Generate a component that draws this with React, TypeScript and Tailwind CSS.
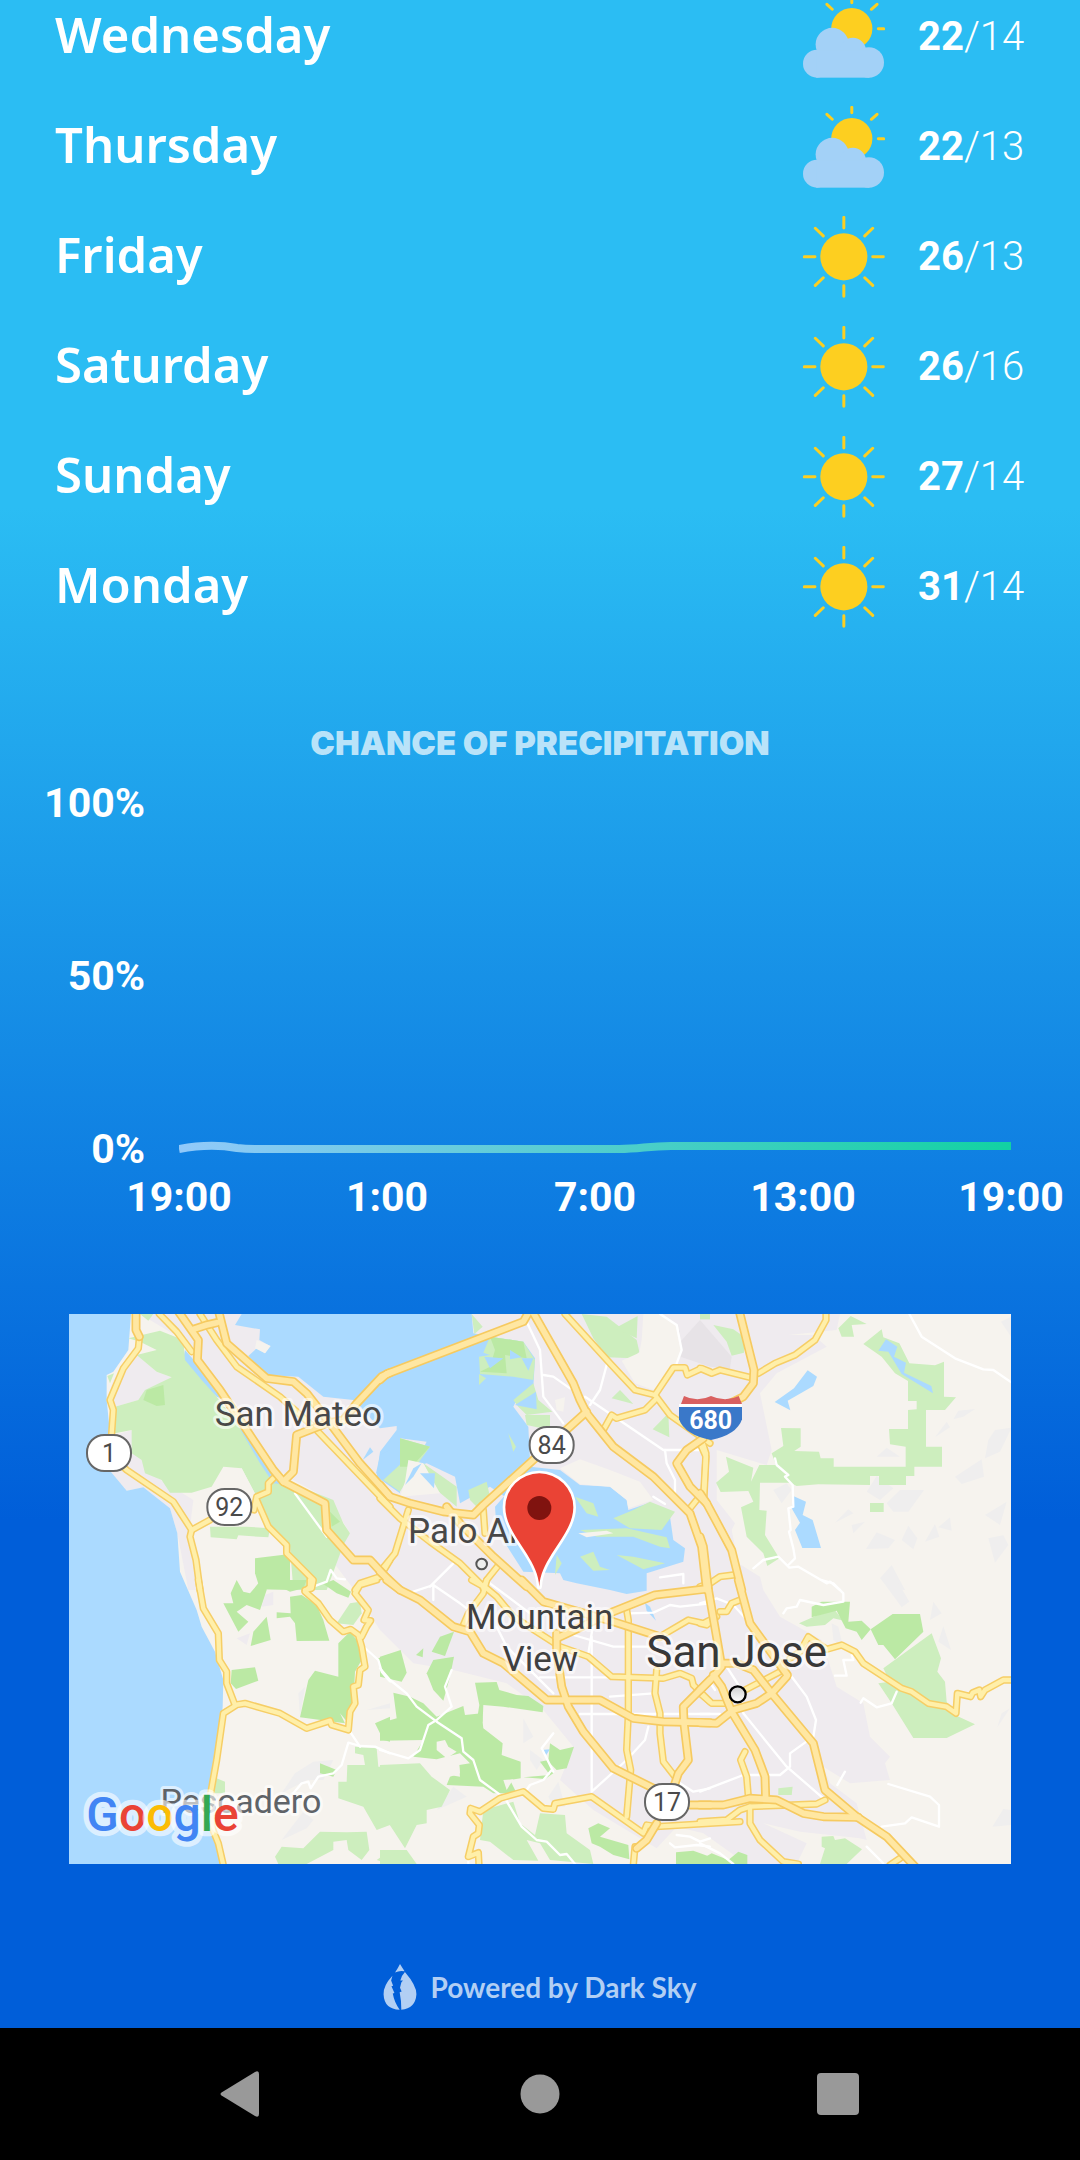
type Tile = [number, number];
type Shape = [Tile, string];

const A: Tile = [0, 0];
const B: Tile = [960, 0];
const C: Tile = [1920, 0];
const D: Tile = [0, 840];
const E: Tile = [960, 840];
const F: Tile = [1920, 840];

const urban: Shape[] = [
  [A, "240,42 2340,42 2330,90 2185,105 2260,105 2300,140 2150,220 2100,280 2135,450 2120,495 1970,450 1970,600 2025,670 2015,690 2035,790 2100,830 2110,870 2160,950 2285,1020 2330,1160 2410,1210 2430,1310 2490,1370 2475,1390 2490,1440 2370,1450 2290,1400 2310,1450 2390,1510 2420,1620 2400,1615 2220,1595 2110,1570 2240,1630 2210,1692 2060,1692 1930,1600 1850,1580 1790,1645 1600,1530 1500,1440 1540,1340 1450,1230 1340,1150 1180,1110 1060,1090 960,990 890,880 800,760 870,700 810,600 700,540 640,500 540,390 410,200 370,120"],
  [A, "225,160 290,215 335,232 290,262 235,300 165,320 140,300 160,240"],
  [A, "215,390 220,440 270,520 400,600 390,680 430,870 385,870 352,700 330,625 250,562 200,572 140,500 150,410"],
  [D, "640,35 640,75 605,80 615,45"],
  [D, "530,175 570,160 560,195"],
];

const hills: Shape[] = [
  [B, "870,160 960,60 1055,170 1050,205 990,200"],
  [B, "860,150 900,90 900,170"],
];

const ridges: Shape[] = [
  [C, "765,530 845,478 852,530 785,552"],
  [C, "530,470 560,443 600,470"],
  [C, "560,610 600,570 672,570 625,635 580,635"],
  [C, "500,575 530,528 580,565 540,600"],
  [C, "498,747 530,697 585,720 565,745"],
  [C, "605,720 625,677 652,715 640,748"],
  [C, "675,725 705,672 718,710"],
  [C, "855,645 920,605 900,675"],
  [C, "865,715 910,706 925,735 885,788"],
  [C, "760,358 775,332 825,327 790,350"],
  [C, "705,412 740,365 750,382"],
  [C, "865,420 885,390 935,383 900,455 855,475"],
  [C, "540,835 575,795 615,870 570,868"],
  [C, "405,668 445,628 460,640"],
  [C, "455,675 495,665 460,700"],
  [C, "220,570 260,550 275,570 245,610"],
  [C, "715,682 750,652 755,692"],
  [C, "903,65 933,50 933,110"],
  [F, "545,0 590,0 628,65 605,82"],
  [F, "700,65 725,100 690,120"],
  [F, "730,138 753,210 715,185"],
  [F, "395,130 415,140 430,205 400,180"],
  [F, "877,740 910,687 933,690 933,735"],
  [F, "892,442 905,400 930,385"],
  [D, "705,580 760,545 820,540 790,600 740,600 665,640"],
  [D, "665,780 730,695 760,720 740,745"],
  [D, "720,410 715,340 735,320"],
  [D, "920,390 990,370 990,385"],
  [E, "430,415 460,470 430,490"],
  [E, "505,650 535,605 555,680 520,680"],
  [E, "170,690 220,620 260,650"],
  [E, "450,540 450,510 490,540 470,570"],
];

const water: Shape[] = [
  [A, "27,42 213,42 205,150 160,215 140,225 140,300 150,400 140,500 200,572 250,562 330,625 352,700 360,815 410,930 425,980 465,1055 490,1140 488,1220 470,1430 443,1480 450,1580 470,1640 485,1692 27,1692"],
  [A, "545,42 525,75 600,88 598,120 630,138 615,160 590,145 565,168 620,225 715,230 790,290 880,300 960,385 1010,378 1010,390 960,455 950,530 1020,580 1020,415 1100,425 1060,500 1100,490 1185,530 1200,610 1290,560 1335,590 1400,540 1410,480 1405,380 1360,320 1370,300 1420,260 1425,175 1390,125 1290,110 1240,100 1235,42"],
  [B, "345,620 450,500 540,510 600,555 690,560 740,600 745,630 805,610 870,650 880,720 915,745 910,785 800,820 800,872 740,882 690,870 590,850 550,840 540,820 430,815 350,690"],
  [A, "375,150 410,190 480,260 500,300 470,290 410,235 370,175"],
  [A, "530,380 560,400 640,520 690,590 725,640 680,620 640,570 590,500"],
  [A, "908,480 930,442 940,455"],
  [A, "948,520 960,465 990,450 990,545"],
  [C, "323,211 351,230 340,258 263,302 271,331 224,306 282,265"],
  [C, "280,588 318,605 308,645 338,660 363,744 307,744 285,690 300,668 275,625"],
  [E, "795,68 810,80 828,122 800,92"],
  [E, "484,510 510,508 498,526"],
];

const park: Shape[] = [
  [A, "205,115 300,92 370,120 375,180 425,240 470,290 530,370 600,490 640,550 720,560 820,600 850,670 870,700 850,735 800,870 700,870 690,740 640,700 590,590 545,505 490,500 455,560 395,578 330,578 305,540 255,520 245,480 215,460 215,390 165,400 165,320 235,300 255,270 335,232 290,215 230,165 290,150 240,125"],
  [A, "240,42 280,42 265,62"],
  [A, "142,228 162,220 150,250"],
  [A, "450,680 560,680 630,685 625,712 535,706 530,718 452,712"],
  [B, "275,42 308,80 283,102"],
  [B, "330,110 430,125 465,180 460,240 400,230 300,222 297,170 330,165 310,158"],
  [B, "297,222 318,235 297,255"],
  [B, "400,300 460,250 475,300 517,335 440,345 415,320"],
  [B, "435,345 510,345 510,390 440,375"],
  [B, "60,415 150,440 100,510 60,575 10,540 75,480"],
  [B, "130,490 230,560 230,620 170,570"],
  [B, "265,570 320,545 330,590 290,620 270,600"],
  [B, "605,42 680,50 770,120 778,155 760,175 680,172 640,115"],
  [B, "705,85 773,48 770,115"],
  [B, "695,295 720,270 760,312"],
  [B, "818,388 865,340 868,412"],
  [B, "700,655 760,630 810,605 885,635 845,690 750,685"],
  [B, "585,590 640,610 655,650 620,640"],
  [B, "600,690 740,685 860,712 870,745 840,740 760,710 650,710"],
  [B, "600,770 640,755 660,800 690,810 640,812"],
  [B, "710,765 760,770 855,790 790,808"],
  [B, "385,400 408,440 400,455"],
  [B, "530,765 545,790 525,825"],
  [C, "40,75 100,88 132,110 132,158 95,167 80,125"],
  [C, "0,42 30,42 30,58 0,58"],
  [C, "415,85 452,48 500,72 455,75 462,110 425,110"],
  [C, "490,132 545,88 550,112 598,130 628,190 705,196 732,185 732,290 768,292 735,330 678,330 678,440 726,440 726,500 643,500 643,528 618,528 618,555 537,555 537,528 510,528 510,555 355,553 290,558 270,548 180,548 178,630 200,632 195,705 238,775 202,798 190,760 140,710 123,622 160,605 145,573 62,576 48,548 87,515 78,470 160,503 153,545 178,495 228,495 215,460 250,438 243,384 302,385 302,440 283,453 357,455 362,475 401,475 401,500 617,500 617,440 570,433 567,387 624,387 624,330 650,328 650,303 624,303 624,243 585,220 545,170"],
  [C, "510,609 551,609 551,636 510,636"],
  [F, "297,130 400,85 420,110 445,125 400,115 375,135 320,140"],
  [F, "550,265 695,160 723,235 712,275 735,305 740,365 765,405 825,433 740,474 640,474 575,370 535,310 570,305"],
  [F, "365,770 400,768 405,780 435,775 486,808 440,852 360,852 375,805 365,800"],
  [F, "235,625 278,620 275,645 235,645"],
  [D, "470,595 495,605 495,640 460,640"],
  [D, "830,130 870,70 900,65 905,100 880,135"],
  [D, "885,500 950,505 955,560 990,560 990,735 950,750 910,680 835,655 835,605 860,605 862,555 915,555 910,525 885,520"],
  [D, "645,830 665,800 730,805 780,755 860,757 920,755 928,810 905,840 865,810 860,780 820,785 820,810 740,852 655,852"],
  [D, "950,840 990,812 990,852"],
  [E, "0,555 120,550 155,590 210,630 185,680 140,690 140,730 110,735 75,805 0,690"],
  [E, "0,810 80,810 110,852 0,852"],
  [E, "300,780 310,690 400,665 420,730 465,765 480,700 555,705 560,760 630,810 640,852 510,840 480,790 440,780 475,842 400,840 330,785"],
];

const forest: Shape[] = [
  [A, "250,300 260,270 310,255 315,315 290,318"],
  [A, "585,775 690,762 690,870 600,868 585,820"],
  [A, "810,635 840,665 815,680"],
  [B, "330,110 430,125 440,175 375,165 380,220 300,215 330,200 345,150"],
  [B, "60,415 150,440 95,500 60,500"],
  [D, "530,0 550,35 570,40 595,10 620,5 620,30 600,90 560,75 530,95 565,125 535,155 490,70 520,70 512,40"],
  [D, "620,110 632,180 572,198 580,155"],
  [D, "610,0 740,0 730,25 690,35 660,20 620,15"],
  [D, "690,50 725,45 770,75 790,120 808,182 710,183 705,130 690,110 650,115 650,97 692,100"],
  [D, "790,12 820,0 873,35 865,53 830,40"],
  [D, "835,190 870,155 895,185 905,240 885,275 880,370 865,430 840,400 855,430 720,412 745,300 765,272 835,290"],
  [D, "515,270 585,262 595,302 528,327 512,310"],
  [D, "780,550 830,570 820,590 780,580"],
  [D, "945,430 990,410 990,485 970,480"],
  [D, "955,235 990,222 990,310 960,270"],
  [E, "0,230 62,210 80,278 65,305 0,290"],
  [E, "140,280 160,240 222,230 210,290 190,362 160,330"],
  [E, "155,215 180,170 222,155 195,228"],
  [E, "108,225 130,205 128,232"],
  [E, "285,308 350,306 358,330 410,345 445,348 490,378 488,397 370,380 310,375 308,425 290,425 298,375"],
  [E, "40,338 90,350 130,370 170,410 250,378 255,405 305,400 310,445 368,490 365,525 422,545 422,595 390,600 410,640 340,640 310,620 200,615 210,590 240,580 238,555 270,550 240,520 170,538 100,530 130,480 0,482 0,430 50,415"],
  [E, "510,490 540,510 582,500 560,565 530,570 510,550 520,580 495,597 430,592 510,585 480,545 505,540"],
  [E, "625,745 655,730 690,745 660,770 745,795 748,838 700,825 660,800 635,790"],
  [E, "888,817 940,812 990,830 990,852 888,852"],
  [F, "335,80 365,65 450,65 445,125 485,122 512,148 485,180 470,155 437,145 410,92 335,112"],
  [F, "512,148 578,102 660,102 670,155 585,238 550,195 535,195"],
  [F, "0,840 35,820 85,840 115,815 142,825 142,852 0,852"],
];

const clearings: Shape[] = [
  [E, "170,485 195,480 205,500 230,515 200,535 170,510"],
  [E, "185,555 235,530 240,590 180,580"],
  [E, "370,600 400,598 380,630"],
  [A, "525,520 545,505 590,590 570,570"],
  [B, "85,480 130,490 180,580 60,590 75,545"],
  [B, "790,42 850,42 895,80 905,150 885,200 820,270 765,250 725,182 778,158 785,120"],
  [B, "540,505 600,478 690,510 780,545 820,600 745,625 740,600 690,560 600,553"],
  [B, "525,300 555,292 550,335 530,330"],
  [B, "595,700 680,692 700,700 620,712"],
  [A, "590,120 632,138 615,160 585,145"],
];

const inlets: Shape[] = [
  [B, "390,150 425,172 390,178"],
  [B, "313,170 370,175 330,205"],
  [B, "425,175 460,175 445,212"],
  [B, "405,315 468,275 470,328"],
  [B, "75,555 100,505 125,490 100,530"],
  [B, "120,520 165,520 162,565"],
  [C, "558,118 592,140 582,170 618,188 612,218 694,258 699,280 605,222 565,155 535,152"],
];

const white: Shape[] = [
  [A, "705,580 800,710"],
  [A, "760,860 800,845 812,810 830,835 855,838"],
  [B, "440,65 480,150 490,290 550,370"],
  [B, "490,225 520,230 570,265"],
  [B, "680,195 660,270 630,315"],
  [B, "615,290 850,450 970,450"],
  [B, "855,450 860,490 885,540 885,600"],
  [B, "840,42 890,75 905,150 890,190"],
  [B, "220,790 150,860"],
  [B, "820,590 855,612"],
  [B, "840,832 910,822 910,850"],
  [C, "628,42 665,110 765,175 850,208 880,210 935,248"],
  [C, "225,475 230,495 265,525 255,530 278,555 280,620 265,625 272,690 267,695 280,745 285,775 265,795"],
  [C, "160,805 190,780 235,770 268,803 295,800 380,850 390,845 420,870"],
  [D, "905,195 955,240 965,275 990,305"],
  [D, "870,455 900,500"],
  [D, "700,640 725,610 745,605 752,625 775,590 820,580 845,555 865,488 900,498 945,500 990,520"],
  [E, "0,265 30,300 80,340 110,380 170,425 245,475 250,515 280,540 300,600 375,655 425,740 470,780 500,785 540,825 560,822 585,852"],
  [E, "215,270 195,320 215,380 170,420 145,435 120,510 85,535 0,510"],
  [E, "635,170 635,635 740,540 795,480 805,440"],
  [E, "600,402 830,402 990,402"],
  [E, "480,292 690,292"],
  [E, "350,140 380,200 520,340"],
  [E, "580,165 700,200 830,200"],
  [E, "640,130 625,220"],
  [E, "745,100 820,98 870,75 900,80 990,70"],
  [E, "690,350 820,340"],
  [E, "520,460 485,505 520,575"],
  [E, "515,570 490,600 450,615 440,630"],
  [E, "330,10 450,100"],
  [E, "160,60 160,15 240,70 260,85"],
  [E, "100,35 160,15"],
  [E, "890,765 930,770 960,785 990,775"],
  [E, "870,790 885,802 950,795 990,800"],
  [E, "900,610 940,635 990,625"],
  [E, "265,830 265,852"],
  [F, "250,100 260,85 290,80 300,60 370,75 430,65 430,40 400,10 365,0"],
  [F, "80,260 125,330 130,400 260,560 370,655"],
  [F, "260,270 320,350 348,420 340,470 270,520 270,560 240,585 130,585 0,635"],
  [F, "455,225 460,240 430,240 440,287 405,287"],
  [F, "590,335 575,370 530,382 490,355 482,368"],
  [F, "565,612 690,650 717,675 717,740 635,712 615,730 545,740"],
  [F, "435,575 412,615"],
  [F, "0,70 50,55 100,75 150,130"],
  [F, "500,800 550,850"],
  [F, "0,402 60,402"],
  [F, "25,300 45,330"],
  [F, "0,790 60,820 100,852"],
];

const minor: Shape[] = [
  [A, "238,115 235,145 190,205 150,300 160,330 155,400 145,460 200,510 340,605 395,690 390,710 408,780 420,870"],
  [A, "298,42 350,95 395,155"],
  [A, "420,42 470,120 530,200 660,290 760,380 990,620"],
  [A, "640,535 625,550 625,575 590,590 582,630"],
  [A, "590,600 625,680 680,735 680,760 760,840 755,865 735,870"],
  [A, "395,690 450,660"],
  [A, "990,780 960,830 900,850 885,870"],
  [B, "555,42 690,190 765,270 825,285 880,203 915,203 922,225 965,205 990,215"],
  [B, "825,285 870,345 990,430"],
  [B, "825,300 795,330 710,355 695,345 670,390"],
  [B, "965,420 978,460 970,600"],
  [B, "930,625 950,600"],
  [B, "85,630 45,760 0,815"],
  [B, "310,630 315,700"],
  [B, "0,595 60,655 150,725 240,790 310,860"],
  [B, "360,790 320,840 310,865"],
  [C, "378,42 378,60 345,120 285,165 225,190 175,220"],
  [C, "0,205 35,220 60,210 150,232"],
  [C, "0,430 18,470 12,590"],
  [C, "100,825 60,830 30,850 0,860"],
  [D, "415,0 430,85 475,160 478,240 500,275 500,310 525,375 555,370 660,400 740,445 810,422 815,435 865,450 870,395 885,370 880,320 895,315 900,270 915,260 905,200 895,165 872,148 850,155 810,120 775,70 735,35 750,20 750,0"],
  [D, "525,378 490,400 470,540 452,640 455,740 475,790 490,855"],
  [D, "950,0 900,15 885,40 925,90 912,120 932,122 920,140 905,170"],
  [E, "275,0 320,25 350,50 400,110 525,190"],
  [E, "320,0 310,40 265,100 250,135"],
  [E, "540,200 625,230 695,290 850,295 900,280 935,295 940,315 990,365"],
  [E, "740,90 745,120 745,400 740,510 752,570 740,710"],
  [E, "830,270 825,340 840,400 840,460 850,545 885,590"],
  [E, "840,170 925,120 970,130 990,120"],
  [E, "1080,725 990,730 830,740 800,735 790,760 635,650 525,670 520,688 490,685 430,635 360,655 300,695 272,685 270,700 298,735 295,760 280,770 265,830 295,818 297,855"],
  [E, "765,800 760,855"],
  [F, "0,725 80,720 120,690 150,680 350,672 375,660"],
  [F, "150,680 150,730 180,780 250,845 295,852"],
  [F, "0,340 35,370 75,370"],
  [F, "135,330 240,275"],
  [F, "135,515 122,540 140,590 145,650"],
  [F, "0,130 20,135 50,110"],
  [F, "60,95 80,95 95,70 120,60"],
  [F, "270,235 300,215 325,170 380,208 425,195 465,215 490,250 605,325 635,335 685,370 740,380 768,400 772,340 812,350 818,338 838,330 842,350 855,330 910,300 940,300"],
  [F, "570,855 600,835"],
];

const major: Shape[] = [
  [A, "228,30 228,90 238,110"],
  [A, "352,30 415,120 412,180 480,270 560,390 640,510 670,545 795,610 800,690 880,780 930,780 990,845"],
  [A, "400,88 440,75 470,68"],
  [A, "475,30 500,130 620,235 700,245 740,280 810,370 900,490 990,590"],
  [A, "990,218 965,230 890,310 850,360 800,370 710,405 700,515 670,545"],
  [B, "0,240 20,222 430,65 450,30"],
  [B, "455,30 580,250 600,300 620,340 700,440 820,530 930,640 965,740 980,870"],
  [B, "620,335 310,615 280,645 190,635 90,610 30,590 0,555"],
  [B, "200,620 240,670 340,770 440,860"],
  [B, "970,415 920,450 890,490 930,560 980,610"],
  [B, "0,815 60,870"],
  [C, "117,30 162,210 160,250 130,290 50,330"],
  [C, "0,580 20,610 95,750 125,870"],
  [C, "0,710 10,740 25,870"],
  [E, "20,0 60,30 120,60 220,140 270,155 310,220 370,250 500,360 660,360 760,415 850,425 990,428"],
  [E, "425,0 490,65 560,85 700,125 840,170"],
  [E, "530,175 700,95 825,45 970,28"],
  [E, "530,160 530,215 545,320 565,380 610,455 700,565 820,625"],
  [E, "990,300 910,380 912,430 925,540 895,580 880,625"],
  [E, "930,675 990,675"],
  [E, "830,730 800,780 770,805"],
  [F, "20,0 55,200 65,260 40,290 0,330"],
  [F, "115,0 150,130 262,285"],
  [F, "40,285 65,320 95,395 165,510 195,590 197,655"],
  [F, "0,428 50,430 100,390 170,370 215,340 260,290"],
  [F, "65,250 110,250 160,270 215,340 340,490 375,630 470,710 560,770 645,860"],
  [F, "0,675 70,675 150,655 230,660 310,700 370,710 475,712"],
];

function Areas({ shapes, fill }: { shapes: Shape[]; fill: string }) {
  return (
    <g fill={fill}>
      {shapes.map(([[x, y], points]) => (
        <polygon key={x + y + points} points={points} transform={`translate(${x} ${y})`} />
      ))}
    </g>
  );
}

function Lines({ shapes, color, width }: { shapes: Shape[]; color: string; width: number }) {
  return (
    <g fill="none" stroke={color} strokeWidth={width} strokeLinejoin="round" strokeLinecap="round">
      {shapes.map(([[x, y], points]) => (
        <polyline key={x + y + points} points={points} transform={`translate(${x} ${y})`} />
      ))}
    </g>
  );
}

function RouteBadge({ x, y, label }: { x: number; y: number; label: string }) {
  return (
    <g>
      <rect x={x - 66} y={y - 54} width="132" height="108" rx="52" fill="#fff" stroke="#666" strokeWidth="6" />
      <text x={x} y={y + 26} textAnchor="middle" fontSize="75" fill="#4a4a4a">
        {label}
      </text>
    </g>
  );
}

const places = [
  { name: "San Mateo", x: 715, y: 378, size: 105, color: "#484848" },
  { name: "Palo Alto", x: 1255, y: 728, size: 105, color: "#484848" },
  { name: "Mountain", x: 1439, y: 987, size: 105, color: "#404040" },
  { name: "View", x: 1441, y: 1112, size: 105, color: "#404040" },
  { name: "San Jose", x: 2030, y: 1102, size: 132, color: "#383838" },
  { name: "Pescadero", x: 543, y: 1539, size: 102, color: "#5f6368" },
];

function LocationMap() {
  return (
    <svg
      viewBox="27 42 2826 1650"
      className="block w-full font-[Roboto,sans-serif]"
      role="img"
      aria-label="Map of Mountain View"
    >
      <defs>
        <linearGradient id="town" x1="0" y1="0" x2="0" y2="1">
          <stop offset="0" stopColor="#cfcfcf" />
          <stop offset="1" stopColor="#fff" />
        </linearGradient>
      </defs>
      <rect x="27" y="42" width="2826" height="1650" fill="#f6f3ee" />
      <Areas shapes={ridges} fill="#efeeee" />
      <Areas shapes={urban} fill="#efebef" />
      <Areas shapes={hills} fill="#e7e3e7" />
      <Areas shapes={water} fill="#abdaff" />
      <Areas shapes={park} fill="#cdeebe" />
      <Areas shapes={forest} fill="#bbe9a4" />
      <Areas shapes={clearings} fill="#f6f3ee" />
      <Areas shapes={inlets} fill="#abdaff" />
      <Lines shapes={white} color="#ffffff" width={7} />
      <Lines shapes={minor} color="#f6ce66" width={22} />
      <Lines shapes={minor} color="#ffefa9" width={13} />
      <Lines shapes={major} color="#f6ca60" width={27} />
      <Lines shapes={major} color="#ffe7a2" width={17} />

      <g strokeLinejoin="round" textAnchor="middle">
        {places.map((p) => (
          <text
            key={p.name}
            x={p.x}
            y={p.y}
            fontSize={p.size}
            fill={p.color}
            stroke="#ffffff"
            strokeOpacity="0.6"
            strokeWidth="18"
            paintOrder="stroke"
          >
            {p.name}
          </text>
        ))}
      </g>
      <circle cx="1265" cy="792" r="16" fill="#eee" stroke="#555" strokeWidth="6" />
      <circle cx="2033" cy="1183" r="24" fill="url(#town)" stroke="#000" strokeWidth="7" />

      <RouteBadge x={147} y={459} label="1" />
      <RouteBadge x={508} y={621} label="92" />
      <RouteBadge x={1475} y={435} label="84" />
      <RouteBadge x={1821} y={1506} label="17" />

      <path d="M1863 312 L1872 288 Q1912 308 1953 288 Q1996 308 2036 288 L2046 312Z" fill="#d96060" />
      <rect x="1857" y="312" width="189" height="9" fill="#fff" />
      <path d="M1857 321H2046V358Q2030 405 1953 420Q1874 405 1857 358Z" fill="#3a78c9" />
      <text x="1952" y="387" textAnchor="middle" fontSize="75" fontWeight="700" fill="#fff">
        680
      </text>

      <path
        d="M1438 860C1434 770 1336 705 1336 622A102 102 0 0 1 1540 622C1540 705 1442 770 1438 860Z"
        fill="#ea4335"
        stroke="#fff"
        strokeWidth="16"
        strokeLinejoin="round"
        paintOrder="stroke"
      />
      <circle cx="1438" cy="624" r="36" fill="#80130f" />

      <text
        x="79"
        y="1592"
        fontSize="144"
        fontWeight="500"
        stroke="#ffffff"
        strokeOpacity="0.6"
        strokeWidth="32"
        strokeLinejoin="round"
        paintOrder="stroke"
      >
        <tspan fill="#4285f4">G</tspan>
        <tspan fill="#ea4335">o</tspan>
        <tspan fill="#fbbc05">o</tspan>
        <tspan fill="#4285f4">g</tspan>
        <tspan fill="#34a853">l</tspan>
        <tspan fill="#ea4335">e</tspan>
      </text>
    </svg>
  );
}

function SunIcon() {
  return (
    <svg viewBox="0 0 247 247" className="size-[82px] shrink-0" role="img" aria-label="Sunny">
      <circle cx="123" cy="123" r="71" fill="#fdcf20" />
      <path
        d="M123 4V36M123 210V242M4 123H36M210 123H242M37 37L61 60M186 186L210 209M210 37L186 60M61 186L37 209"
        stroke="#fdcf20"
        strokeWidth="9"
        strokeLinecap="round"
      />
    </svg>
  );
}

function PartlyCloudyIcon() {
  return (
    <svg viewBox="0 0 247 247" className="size-[82px] shrink-0" role="img" aria-label="Partly cloudy">
      <circle cx="147" cy="98" r="62" fill="#fdcf20" />
      <path
        d="M147 4V20M227 99H243M72 25L88 40M223 25L206 40"
        stroke="#fdcf20"
        strokeWidth="9"
        strokeLinecap="round"
      />
      <g fill="#a3d1f7">
        <circle cx="88" cy="146" r="50" />
        <circle cx="150" cy="166" r="40" />
        <circle cx="198" cy="200" r="46" />
        <circle cx="42" cy="204" r="42" />
        <rect x="40" y="163" width="160" height="83" />
      </g>
    </svg>
  );
}

const days = [
  { day: "Wednesday", high: 22, low: 14, cloudy: true },
  { day: "Thursday", high: 22, low: 13, cloudy: true },
  { day: "Friday", high: 26, low: 13, cloudy: false },
  { day: "Saturday", high: 26, low: 16, cloudy: false },
  { day: "Sunday", high: 27, low: 14, cloudy: false },
  { day: "Monday", high: 31, low: 14, cloudy: false },
];

function Forecast() {
  return (
    <ul className="-mt-[18px]">
      {days.map((d) => (
        <li key={d.day} className="flex h-[110px] items-center pr-[55px] pl-[55px]">
          <span className="flex-1 pb-1 font-['Noto_Sans',sans-serif] text-[49px] font-semibold">{d.day}</span>
          {d.cloudy ? <PartlyCloudyIcon /> : <SunIcon />}
          <span className="ml-[33px] w-[107px] text-[40px] font-[350] whitespace-nowrap">
            <span className="font-bold">{d.high}</span>/{d.low}
          </span>
        </li>
      ))}
    </ul>
  );
}

function Precipitation() {
  return (
    <section className="mt-[81px]">
      <h2 className="text-center font-[Inter,sans-serif] text-[33px] leading-10 font-black text-white/70">
        CHANCE OF PRECIPITATION
      </h2>
      <div className="mt-4 text-[41px] leading-[48px] font-bold">
        <div className="flex">
          <div className="flex h-[394px] w-[145px] flex-col justify-between text-right">
            <span>100%</span>
            <span>50%</span>
            <span>0%</span>
          </div>
          <svg
            viewBox="0 0 832 394"
            preserveAspectRatio="none"
            className="mr-[69px] ml-[34px] h-[394px] min-w-0 flex-1"
            role="img"
            aria-label="Chance of precipitation over 24 hours"
          >
            <defs>
              <linearGradient id="rain" gradientUnits="userSpaceOnUse" x1="0" y1="0" x2="832" y2="0">
                <stop offset="0" stopColor="#92c9fa" />
                <stop offset="1" stopColor="#12d2a2" />
              </linearGradient>
            </defs>
            <path
              d="M0 370C26 365 42 366 58 369Q66 370 76 370H440C462 370 468 367 492 367H832"
              fill="none"
              stroke="url(#rain)"
              strokeWidth="8"
            />
          </svg>
        </div>
        <div className="flex justify-between pr-[15px] pl-[125px]">
          {["19:00", "1:00", "7:00", "13:00", "19:00"].map((t, i) => (
            <span key={i} className="w-[108px] text-center">
              {t}
            </span>
          ))}
        </div>
      </div>
    </section>
  );
}

function DarkSkyIcon() {
  return (
    <svg viewBox="0 0 102 140" className="h-[46px] w-[34px]" aria-hidden="true" fill="currentColor">
      <path d="M51 0Q57 10 65 22Q48 19 36 26Q44 14 51 0Z" />
      <path d="M28 36Q0 66 1 92Q3 138 50 139Q34 118 29 90L34 88L25 68L30 66L24 50Z" />
      <path d="M66 24Q102 66 101 92Q98 136 55 139Q55 110 50 86L56 84L51 72L55 56L60 50L52 50Q56 34 66 24Z" />
    </svg>
  );
}

export default function App() {
  return (
    <div className="flex min-h-screen flex-col overflow-hidden bg-black font-[Roboto,sans-serif] text-white">
      <main className="flow-root grow bg-[linear-gradient(to_bottom,#2bbdf3_25%,#005ed9_75%)]">
        <Forecast />
        <Precipitation />
        <div className="mx-[69px] mt-[93px]">
          <LocationMap />
        </div>
        <footer className="mt-[99px] mb-4 flex h-12 items-center justify-center">
          <a
            href="#dark-sky"
            className="flex items-center gap-[13px] font-[Lato,sans-serif] text-[28px] font-bold text-[#b2cff4]"
          >
            <DarkSkyIcon />
            Powered by Dark Sky
          </a>
        </footer>
      </main>
      <nav className="flex h-[132px] items-center justify-between bg-black px-[20%] text-[#999]">
        <button type="button" aria-label="Back">
          <svg viewBox="0 0 48 48" className="size-12" fill="currentColor">
            <path d="M5.500 22.500L39 2Q43 0 43 4V44Q43 48 39 46L5.500 25.500Q3.500 24 5.500 22.500Z" />
          </svg>
        </button>
        <button type="button" aria-label="Home">
          <svg viewBox="0 0 48 48" className="size-12" fill="currentColor">
            <circle cx="24" cy="24" r="19.500" />
          </svg>
        </button>
        <button type="button" aria-label="Recent apps">
          <svg viewBox="0 0 48 48" className="size-12" fill="currentColor">
            <rect x="1" y="3" width="42" height="42" rx="4" />
          </svg>
        </button>
      </nav>
    </div>
  );
}
